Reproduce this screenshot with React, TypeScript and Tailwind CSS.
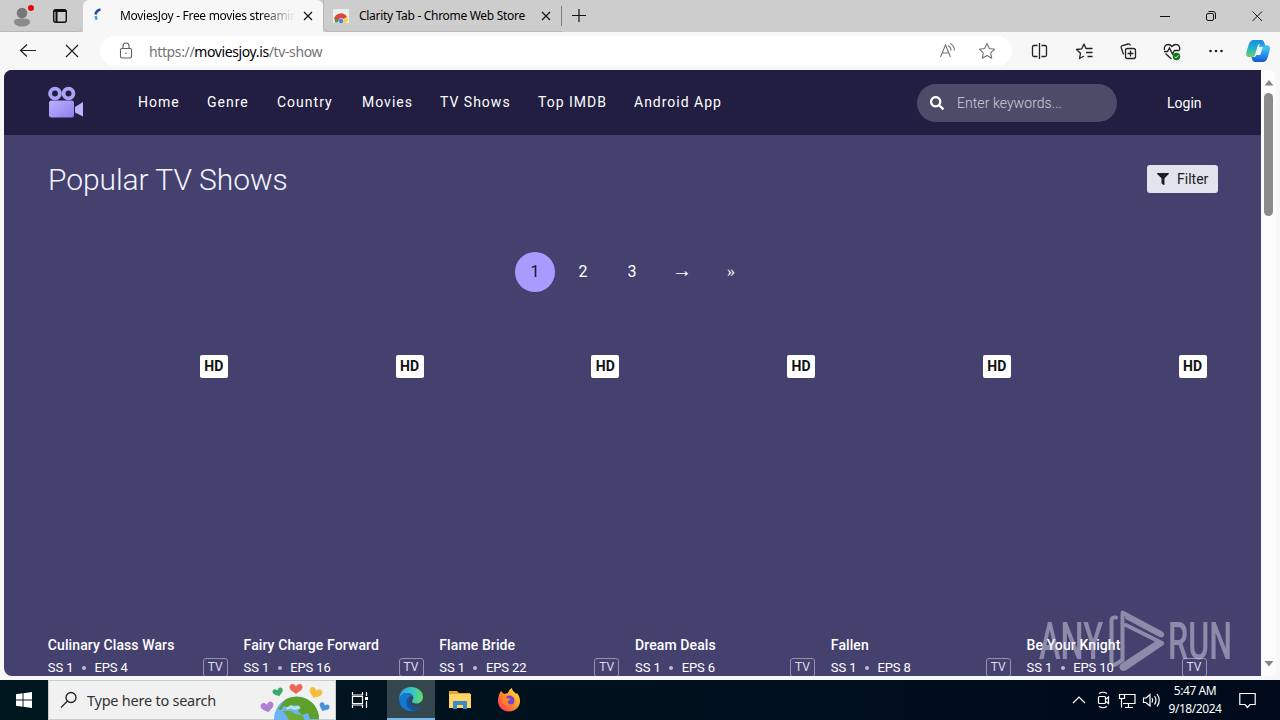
import { FaFilter, FaSearch } from "react-icons/fa";

const navLinks = [
  { label: "Home", width: "w-[69px]" },
  { label: "Genre", width: "w-[70px]" },
  { label: "Country", width: "w-[85px]" },
  { label: "Movies", width: "w-[78px]" },
  { label: "TV Shows", width: "w-[98px]" },
  { label: "Top IMDB", width: "w-[96px]" },
  { label: "Android App", width: "w-[100px]" },
];

const shows = [
  { title: "Culinary Class Wars", eps: 4 },
  { title: "Fairy Charge Forward", eps: 16 },
  { title: "Flame Bride", eps: 22 },
  { title: "Dream Deals", eps: 6 },
  { title: "Fallen", eps: 8 },
  { title: "Be Your Knight", eps: 10 },
];

function CloseIcon({ className = "" }) {
  return (
    <svg viewBox="0 0 10 10" className={className} fill="none" stroke="#111" strokeWidth="1.2">
      <path d="M1 1l8 8M9 1l-8 8" />
    </svg>
  );
}

function TabBar() {
  return (
    <div className="flex h-8 shrink-0 bg-[#cdcdcd]">
      <div className="flex w-[83px] shrink-0 border-b border-[#b8b8b8] rounded-br-md">
        <svg width="82" height="31" viewBox="0 0 82 31">
          <circle cx="22" cy="13" r="5.3" fill="#777" />
          <path d="M14 22c0-3 3-3.500 8-3.500s8 .5 8 3.500c0 2.500-3.500 4.500-8 4.500s-8-2-8-4.500z" fill="#8b8b8b" />
          <circle cx="31" cy="8" r="3" fill="#e30613" />
          <rect x="53.700" y="9.700" width="12.600" height="12.600" rx="2" fill="none" stroke="#111" strokeWidth="1.400" />
          <path d="M54 11h12.500M56.500 10v12" stroke="#111" strokeWidth="2" />
        </svg>
      </div>
      <div className="flex w-[240px] shrink-0 items-center rounded-t-md bg-[#f7f7f7] pl-[9px]">
        <svg width="14" height="16" viewBox="0 0 14 16" fill="none">
          <path d="M8.500 1.500C6 2 4 4 3.500 6.500" stroke="#1d4f8f" strokeWidth="2.600" />
          <path d="M2.300 8.300l2.800-.3.500 3.400-2 .8z" fill="#4b94d8" />
        </svg>
        <span className="ml-[14px] w-[175px] overflow-hidden whitespace-nowrap bg-linear-to-r from-black from-80% to-transparent bg-clip-text text-[12px] tracking-[-0.3px] text-transparent">
          MoviesJoy - Free movies streaming
        </span>
        <CloseIcon className="ml-[8px] size-[10px]" />
      </div>
      <div className="flex w-[239px] shrink-0 items-center rounded-bl-md border-b border-l border-[#b8b8b8] pl-[9px]">
        <svg width="16" height="16" viewBox="0 0 16 16">
          <path d="M0 1h16v14H0z" fill="#eee" />
          <path d="M1 11a7 7 0 0 1 13-2l-3.500 2a3 3 0 0 0-5 1.500z" fill="#d64b40" />
          <path d="M1.500 10.500l4 2-.5 2H2z" fill="#3d9c57" />
          <path d="M14 9l1 4-2 2h-3l1-4z" fill="#f7d348" />
          <circle cx="8" cy="13" r="2.300" fill="#4c83df" />
        </svg>
        <span className="ml-[10px] w-[176px] whitespace-nowrap text-[12px] tracking-[-0.3px] text-black">
          Clarity Tab - Chrome Web Store
        </span>
        <CloseIcon className="ml-[6px] size-[10px]" />
        <div className="ml-auto h-5 w-px bg-[#7d7d7d]" />
      </div>
      <svg className="ml-[10px] mt-[9px]" width="14" height="14" viewBox="0 0 14 14" stroke="#111" strokeWidth="1.200">
        <path d="M0 6.500h14M7 0v13" />
      </svg>
      <div className="ml-auto flex">
        <svg width="140" height="32" viewBox="1140 0 140 32" fill="none" stroke="#111" strokeWidth="1">
          <path d="M1160 16.500h10M1252.500 11.500l9.500 9.500M1262 11.500l-9.500 9.500" />
          <rect x="1206.500" y="13.500" width="7" height="7" rx="1.500" />
          <path d="M1208.500 11.500h4.500a2.500 2.500 0 0 1 2.500 2.500v5" />
        </svg>
      </div>
    </div>
  );
}

function Toolbar() {
  return (
    <div className="flex h-[38px] shrink-0 items-center bg-[#f7f7f7]">
      <svg width="100" height="38" viewBox="0 32 100 38" fill="none" stroke="#222" strokeWidth="1.200">
        <path d="M27 44.500l-6.500 6 6.500 6M20.500 50.500H36M66 45l12 12M78 45l-12 12" />
      </svg>
      <div className="flex h-[30px] w-[912px] items-center rounded-full bg-white">
        <svg className="ml-[19px]" width="14" height="18" viewBox="0 0 14 18" fill="none" stroke="#5f5f5f" strokeWidth="1.100">
          <rect x="1.500" y="6.500" width="11" height="9.500" rx="1.500" />
          <path d="M4 6.500V4a3 3 0 0 1 6 0v2.500" />
          <circle cx="7" cy="11.300" r=".8" fill="#5f5f5f" stroke="none" />
        </svg>
        <span className="ml-4 text-[14px] tracking-[-0.38px] text-[#757575]">
          https://<span className="text-black">moviesjoy.is</span>/tv-show
        </span>
        <svg className="ml-auto" width="76" height="30" viewBox="936 36 76 30" fill="none" stroke="#737373" strokeWidth="1.100">
          <path d="M940.500 57l5-12 5 12M942.300 53h6.500M948 45.500c2 1 3 2.500 3 5M950 43.500c3 1.300 4.500 4 4.500 7" />
          <path d="M987 43.500l2.300 5 5.400.7-4 3.700 1 5.400-4.700-2.700-4.700 2.700 1-5.400-4-3.700 5.400-.7z" strokeLinejoin="round" />
        </svg>
      </div>
      <svg width="268" height="38" viewBox="1012 32 268 38" fill="none" stroke="#222" strokeWidth="1.300">
        <path d="M1037.500 45.500h-3.500a1.500 1.500 0 0 0-1.500 1.500v8a1.500 1.500 0 0 0 1.500 1.500h3.500M1041.500 45.500h3.500a1.500 1.500 0 0 1 1.500 1.500v8a1.500 1.500 0 0 1-1.500 1.500h-3.500M1039.500 43v16" />
        <path d="M1086 48.800l-2-4.800-2.200 4.800-5.300.7 4 3.700-1 5.300 4.500-2.500M1086 48.500h6.500M1086 52.500h6.500M1087.500 56.500h5" strokeLinejoin="round" />
        <rect x="1125.500" y="48.500" width="10" height="10" rx="2" />
        <path d="M1130.500 50.500v6M1127.500 53.500h6M1123.500 54.500l-2.200-6.500a2 2 0 0 1 1.300-2.500l5.400-1.500a2 2 0 0 1 2.500 1.500" />
        <path d="M1164.500 50c-.8-3 1-5.500 3.700-5.500 1.700 0 2.800.8 3.800 2 1-1.200 2.200-2 3.800-2 3 0 4.500 2.500 3.700 5.500M1165.500 53.500l6 5.500M1164 51.500h3.500l2-3.500 3 6 2-3.500h5" />
        <circle cx="1176.500" cy="56.500" r="3.700" fill="#0b7a15" stroke="none" />
        <path d="M1174.700 56.800l1.300 1.200 2.500-2.800" stroke="#d7f0d7" strokeWidth="1" />
        <g fill="#222" stroke="none">
          <circle cx="1210.500" cy="51" r="1.300" />
          <circle cx="1216" cy="51" r="1.300" />
          <circle cx="1221.500" cy="51" r="1.300" />
        </g>
        <defs>
          <linearGradient id="copilotA" x1="0" y1="0" x2="0" y2="1">
            <stop offset="0" stopColor="#168ce5" />
            <stop offset=".5" stopColor="#22b5c6" />
            <stop offset="1" stopColor="#6ccf63" />
          </linearGradient>
          <linearGradient id="copilotB" x1="0" y1="0" x2="0" y2="1">
            <stop offset="0" stopColor="#1760c4" />
            <stop offset=".35" stopColor="#3cc8ef" />
            <stop offset="1" stopColor="#1457d8" />
          </linearGradient>
        </defs>
        <g stroke="none">
          <path d="M1260 40c2.500 0 3.800 1 4.500 3l.8 2.500h1.700c2.500 0 3.500 2 2.800 4.500l-2 7c-1 3.500-2.500 5-5 5h-7.500c-2 0-3-1.500-3.500-3.500l-.3-1.500h2c1.500 0 2.400-.6 2.900-2l3-10c.4-1.200.9-1.700 2-1.700z" fill="url(#copilotB)" />
          <path d="M1261 40h-7.500c-2.500 0-4 2-5 5l-2 7c-.8 3 .3 5 2.800 5h2.700c2 0 2.500-1 3-2.500l2.500-8c.7-2 1.500-2.500 3.500-2.500h3c-.7-2.700-1.500-4-3-4z" fill="url(#copilotA)" />
          <path d="M1258.500 47h4.300l-2.600 8h-4.200z" fill="#f7f7f7" />
        </g>
      </svg>
    </div>
  );
}

function MovieLogo() {
  return (
    <svg width="36" height="34" viewBox="0 0 36 34">
      <defs>
        <linearGradient id="camera" x1="0" y1="0" x2="1" y2="1">
          <stop offset="0" stopColor="#bfb0ff" />
          <stop offset="1" stopColor="#8c80ea" />
        </linearGradient>
      </defs>
      <g fill="none" stroke="#aaa3f5" strokeWidth="3.900">
        <circle cx="7" cy="7.500" r="4.900" />
        <circle cx="20.500" cy="7.500" r="4.900" />
      </g>
      <rect x="1" y="14.500" width="25" height="17" rx="2.500" fill="url(#camera)" />
      <path d="M27 21l8-5v14.500l-8-4z" fill="#bdb2fb" />
    </svg>
  );
}

function SiteHeader() {
  return (
    <header className="flex h-[65px] shrink-0 items-center bg-[#211e41] pl-11 text-white">
      <MovieLogo />
      <nav className="ml-[54px] flex text-[14px] tracking-[1px]">
        {navLinks.map((link) => (
          <a key={link.label} className={`whitespace-nowrap ${link.width}`}>
            {link.label}
          </a>
        ))}
      </nav>
      <div className="ml-auto flex h-[38px] w-[200px] items-center rounded-full bg-[#4d4b67] pl-[13px]">
        <FaSearch className="size-[14px]" />
        <span className="ml-[13px] pt-px text-[14px] font-light tracking-[0.06px] text-[#d0cfda]">Enter keywords...</span>
      </div>
      <a className="ml-[50px] w-[94px] pt-0.5 text-[14px]">Login</a>
    </header>
  );
}

function Pagination() {
  return (
    <div className="mt-[59px] ml-[511px] flex h-10 items-center text-center text-[16px]">
      <span className="flex size-10 items-center justify-center rounded-full bg-[#a89bff] text-[#14122b]">1</span>
      <span className="ml-2 w-10">2</span>
      <span className="ml-[9px] w-10">3</span>
      <span className="ml-[9px] w-[42px] pb-[5px] font-['Liberation_Serif',serif] text-[20px] leading-5">→</span>
      <span className="ml-2 w-10 font-['Liberation_Serif',serif]">»</span>
    </div>
  );
}

function ShowCard({ title, eps }: { title: string; eps: number }) {
  return (
    <div className="w-[180px]">
      <div className="flex h-[270px] items-start justify-end pt-[10px]">
        <span className="flex h-[23px] w-7 items-center justify-center rounded-[2px] bg-white text-[14px] font-bold text-[#111]">
          HD
        </span>
      </div>
      <h3 className="mt-[20px] h-5 whitespace-nowrap text-[14px] leading-5 font-medium tracking-[0.1px]">{title}</h3>
      <div className="mt-[3px] flex h-[19px] items-center text-[13px]">
        <span className="tracking-[-0.1px]">SS 1</span>
        <span className="mx-[8.5px] size-1 rounded-full bg-[#bbb8d5]" />
        <span className="tracking-[-0.1px]">EPS {eps}</span>
        <span className="ml-auto flex h-[19px] w-[25px] items-start justify-center rounded-[3px] border border-[#9390b3] text-[12px] leading-[16px] text-[#dedce9]">
          TV
        </span>
      </div>
    </div>
  );
}

function Page() {
  return (
    <div className="flex h-[606px] w-[1257px] shrink-0 flex-col overflow-hidden rounded-tl-lg rounded-bl-lg bg-[#45416f] font-['Roboto',sans-serif] text-white">
      <SiteHeader />
      <div className="flex h-[58px] shrink-0 items-end justify-between pr-[43px] pl-11">
        <h1 className="mb-[-7px] text-[30px] leading-10 font-light tracking-[-0.07px] text-[#f4f3ff]">Popular TV Shows</h1>
        <button className="flex h-7 w-[71px] items-center rounded-[3px] bg-[#e1e4ed] pl-[10px] text-[14px] text-[#1c2026]">
          <FaFilter className="size-3" />
          <span className="ml-2">Filter</span>
        </button>
      </div>
      <Pagination />
      <div className="mt-[53px] ml-[43.8px] flex w-[1158.8px] shrink-0 justify-between">
        {shows.map((show) => (
          <ShowCard key={show.title} {...show} />
        ))}
      </div>
    </div>
  );
}

function Scrollbar() {
  return (
    <div className="flex w-[15px] flex-col items-center rounded-r-lg bg-[#fcfcfc]">
      <svg width="10" height="6" viewBox="0 0 10 6" className="mt-[10px] shrink-0">
        <path d="M5 0l4.500 5.500H.5z" fill="#868686" />
      </svg>
      <div className="mt-[7px] h-[123px] w-[9px] rounded-full bg-[#8b8b8b]" />
      <svg width="10" height="6" viewBox="0 0 10 6" className="mt-auto mb-[9px] shrink-0">
        <path d="M5 5.500L.5 0h9z" fill="#868686" />
      </svg>
    </div>
  );
}

function Watermark() {
  return (
    <svg className="absolute top-[600px] left-[1030px] opacity-45" width="220" height="80" viewBox="1030 600 220 80">
      <g fill="#e8e6f2" fontFamily="Roboto, sans-serif" fontSize="52" fontWeight="500">
        <text x="1039" y="659" textLength="64" lengthAdjust="spacingAndGlyphs">ANY</text>
        <text x="1168" y="659" textLength="64" lengthAdjust="spacingAndGlyphs">RUN</text>
      </g>
      <g fill="none" stroke="#e8e6f2" strokeWidth="4" strokeLinejoin="round" strokeLinecap="round">
        <path d="M1116 617.500c-3-.5-4.500.5-4.500 3v40c0 4 1.500 5 4 4l7-4.500V612.500l38.500 20.500c2 1.500 1 3-1 2l-33-17.500" />
        <path d="M1126 625l36 18-33.500 19M1162 643.500l-37 25c-3 1.500-5-1.500-2-3.500l33-21.500" />
      </g>
    </svg>
  );
}

function Globe() {
  const heart = "M0 2C-2-2-6.500-1-6.500 2.500-6.500 6-2 7.500 0 9.500 2 7.500 6.500 6 6.500 2.500 6.500-1 2-2 0 2z";
  return (
    <svg width="76" height="39" viewBox="259 681 76 39">
      <circle cx="296.500" cy="719" r="22.500" fill="#6db4f5" />
      <path d="M285 700c7-4 18-5 26 2 5 4 8 10 8 17h-9l-2-6-6 2-4-4 3-4-5-2-6 3-6-2-3 4-3-1z" fill="#5fa02a" />
      <path d="M283 711l8 0 4 3 7 1 3 5h-16l-3-5z" fill="#6dab33" />
      <path d="M286 708l5-3 4 1.500 4-1 1 3-5 1.500-4-1.500-4 1z" fill="#b8e2ee" />
      <path d={heart} transform="translate(296 684.500)" fill="#ed6553" />
      <path d={heart} transform="translate(277 689) rotate(-18) scale(.8)" fill="#39a96b" />
      <path d={heart} transform="translate(317 689) rotate(22)" fill="#f5bd3d" />
      <path d={heart} transform="translate(266.500 703) rotate(-12)" fill="#ad82d5" />
      <path d={heart} transform="translate(325.500 704) rotate(25) scale(.8)" fill="#4692d8" />
    </svg>
  );
}

function TaskbarApps() {
  return (
    <div className="flex">
      <div className="flex w-[51px] items-center pl-[15px]">
        <svg width="18" height="18" viewBox="0 0 18 18" fill="none" stroke="#fff" strokeWidth="1.200">
          <path d="M1.500 1v3h10V1M1.500 17v-3h10v3M1.500 5.500h10v7h-10zM15.500 1v4M15.500 10v7" />
          <path d="M14 6h3v3h-3z" fill="#fff" stroke="none" />
        </svg>
      </div>
      <div className="flex w-12 items-center justify-center border-b-2 border-[#76b9ed] bg-[#34474f]">
        <svg width="24" height="24" viewBox="0 0 24 24">
          <defs>
            <linearGradient id="edgeTop">
              <stop offset="0" stopColor="#289fdb" />
              <stop offset=".55" stopColor="#38c5cc" />
              <stop offset="1" stopColor="#65dc59" />
            </linearGradient>
          </defs>
          <path d="M0 13C0 5 5 0 12 0s12 4.500 12 10c0 4-3 6.500-6.500 6.500-2.500 0-4.500-1-4.500-2.300 0-.8 1.300-1.200 1.300-3.500C14.300 8 11.500 6 8 6c-4 0-7 3-8 7z" fill="url(#edgeTop)" />
          <path d="M0 12c1-4 4-6 8-6 3 0 5 1.500 6 3.500-3-1-6 1-6 5 0 5 5 8.500 10 6.800l3.500-1.600C19.500 22.500 16 24 12 24 5 24 0 18.500 0 12z" fill="#1378cf" />
          <path d="M11 9.500c-5 2-5.500 11 2 14 3 .5 6.500-1 8.500-3.800-5 2-11-.2-11-5.700 0-1.800.3-3 .5-4.500z" fill="#12559f" />
        </svg>
      </div>
      <div className="flex w-[49px] items-center justify-center">
        <svg width="22" height="20" viewBox="0 0 22 20">
          <path d="M0 1h8l2 2h11v4H0z" fill="#e5a526" />
          <path d="M0 4h22v14H0z" fill="#ffd567" />
          <path d="M4 12q0-1 1-1h12q1 0 1 1v7h-4v-4H8v4H4z" fill="#378cc9" />
        </svg>
      </div>
      <div className="flex w-[49px] items-center justify-center">
        <svg width="24" height="24" viewBox="0 0 24 24">
          <defs>
            <linearGradient id="firefox" x1="1" y1="0" x2="0" y2="1">
              <stop offset="0" stopColor="#fff044" />
              <stop offset=".45" stopColor="#ff9a24" />
              <stop offset="1" stopColor="#ff2463" />
            </linearGradient>
          </defs>
          <path d="M4 3l3 3 4-1c1-3 2-4 4-5 0 3 3 4 4 6l1-1c2 3 3 5 3 8 0 6-5 10.500-11 10.500S1 19 1 13c0-4 1-7 3-10z" fill="url(#firefox)" />
          <circle cx="12.500" cy="12.500" r="5" fill="#7543d7" />
          <path d="M5 9c3-1 4 0 5 1l4 1-3 2c-1 2 1 4 5 3-3 3-8 2-10-1-1-2-1-4-1-6z" fill="#ff8424" />
        </svg>
      </div>
    </div>
  );
}

function Taskbar() {
  return (
    <div className="flex h-10 shrink-0 bg-linear-to-r from-[#001720] to-[#000a1b] text-white">
      <div className="flex w-12 items-center justify-center">
        <svg width="16" height="16" viewBox="0 0 16 16" fill="#fff">
          <path d="M0 2.200l6.600-.9v6.200H0zM7.500 1.200L16 0v7.500H7.500zM0 8.400h6.600v6.300L0 13.800zM7.500 8.400H16V16l-8.500-1.200z" />
        </svg>
      </div>
      <div className="flex w-[288px] items-center border border-[#c9cccd] bg-[#f1f1f1] pl-[11px]">
        <svg width="18" height="18" viewBox="0 0 18 18" fill="none" stroke="#222" strokeWidth="1.300">
          <circle cx="11" cy="6.500" r="5" />
          <path d="M7.500 10L1 16.500" />
        </svg>
        <span className="ml-[9px] pt-px text-[14.500px] tracking-[-0.24px] whitespace-nowrap text-[#333]">Type here to search</span>
        <div className="ml-auto">
          <Globe />
        </div>
      </div>
      <TaskbarApps />
      <div className="ml-auto flex items-center">
        <svg width="96" height="40" viewBox="1068 680 96 40" fill="none" stroke="#fff" strokeWidth="1.200">
          <path d="M1073 703l6-6 6 6" />
          <rect x="1098.500" y="696.500" width="7" height="7" rx="1" />
          <path d="M1106 699l2.500-2v6.500l-2.500-2M1099 693.500q4-2.500 8 0M1099 706.500q4 2.500 8 0" />
          <path d="M1123 694.500h12v9h-12M1128.500 704v3.500M1125 707.500h8M1119.500 694.500h5v4h-5zM1121.500 699v8.500" />
          <path d="M1143.500 698h2.500l4-3.500v11.500l-4-3.500h-2.500zM1152 698q1.500 2 0 4.500M1154.500 696q3 4 0 8.500M1157 694q4.500 6 0 12.500" />
        </svg>
        <div className="w-[62px] text-center text-[12px] leading-[18px] tracking-[-0.45px] whitespace-nowrap">
          <div>5:47 AM</div>
          <div>9/18/2024</div>
        </div>
        <svg className="mr-[24px] ml-[13px]" width="17" height="17" viewBox="0 0 17 17" fill="none" stroke="#fff" strokeWidth="1.200">
          <path d="M.8 1.500h15.400v11h-5.200l-2.500 3-2.500-3H.8z" />
        </svg>
      </div>
    </div>
  );
}

export default function App() {
  return (
    <div className="relative flex h-[720px] w-[1280px] flex-col overflow-hidden bg-[#f7f7f7] font-['Noto_Sans','Open_Sans',sans-serif]">
      <TabBar />
      <Toolbar />
      <div className="mb-1 flex h-[606px] shrink-0 pl-1">
        <Page />
        <Scrollbar />
      </div>
      <Taskbar />
      <Watermark />
    </div>
  );
}
